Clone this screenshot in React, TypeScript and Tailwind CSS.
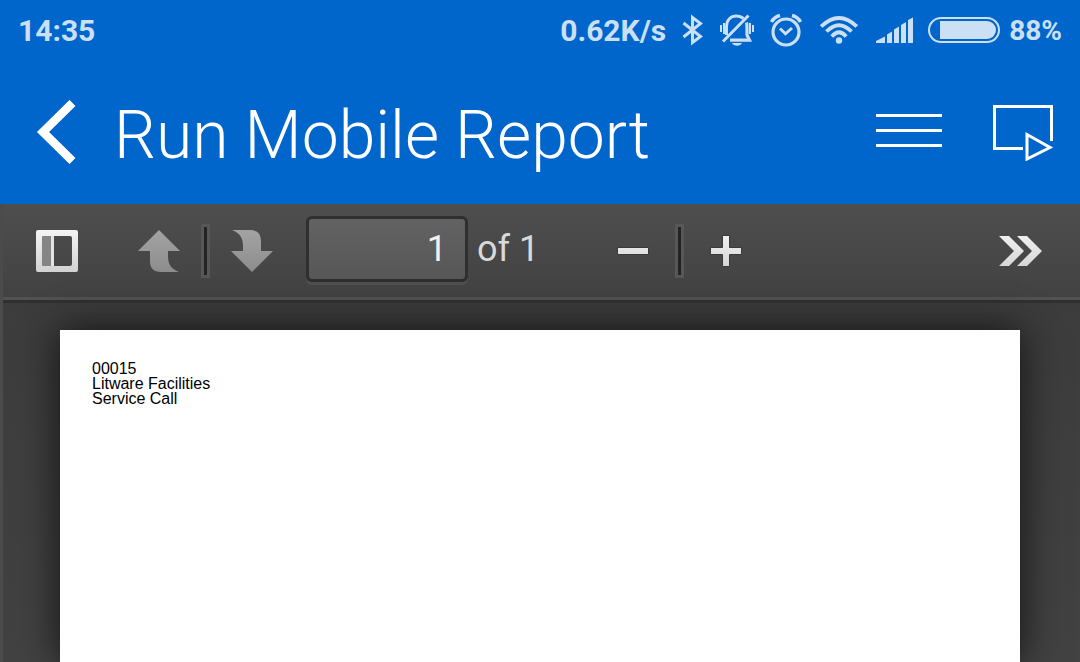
import type { ReactNode } from "react";

function BluetoothIcon() {
  return (
    <svg width="22" height="32" viewBox="0 0 22 32" fill="none" stroke="currentColor" strokeWidth="3">
      <path d="M1.500 9 L18.500 22.500 L10.500 28.500 V3.500 L18.500 9.500 L1.500 23" />
    </svg>
  );
}

function SilentIcon() {
  return (
    <svg width="34" height="34" viewBox="0 0 34 34" fill="none" stroke="currentColor">
      <path d="M6.500 22 V14 C6.500 6.500 11 3 16.500 3 C19.500 3 21.500 3.800 23.500 5.500" strokeWidth="3" />
      <path d="M26.500 9.500 C27 11 27 12.500 27 14 V22 L29.500 27.200 H10" strokeWidth="3.200" />
      <path d="M28.500 2.500 L3 28.500" strokeWidth="3" />
      <path d="M1 12 V19 M4 10 V21 M30 10 V21 M33 12 V19" strokeWidth="2" />
      <path d="M12 30 H22 C20.500 33.500 13.500 33.500 12 30 Z" fill="currentColor" stroke="none" />
    </svg>
  );
}

function AlarmIcon() {
  return (
    <svg width="32" height="34" viewBox="0 0 32 34" fill="none" stroke="currentColor">
      <circle cx="16" cy="19" r="13" strokeWidth="3.200" />
      <path d="M10 15.500 L15.500 20.800 L22 15" strokeWidth="3" />
      <path d="M1.500 9 Q4 4 10 2.500 M22 2.500 Q28 4 30.500 9" strokeWidth="3.400" />
    </svg>
  );
}

function WifiIcon() {
  return (
    <svg width="38" height="28" viewBox="0 0 38 28" fill="none" stroke="currentColor" strokeWidth="3.800">
      <path d="M1.200 10.500 Q19 -6.500 36.800 10.500" />
      <path d="M6.500 15.500 Q19 3 31.500 15.500" />
      <path d="M11.800 20.500 Q19 12 26.200 20.500" />
      <circle cx="19" cy="24.500" r="3.200" fill="currentColor" stroke="none" />
    </svg>
  );
}

function SignalIcon() {
  return (
    <svg width="37" height="26" viewBox="0 0 37 26" fill="currentColor">
      <path d="M0 26 V24 L9 19.500 V26 Z" />
      <path d="M11 26 V17.500 L16 14.500 V26 Z" />
      <path d="M18 26 V12.500 L23 9.500 V26 Z" />
      <path d="M25 26 V8 L30 5 V26 Z" />
      <path d="M32 26 V3 L37 0.500 V26 Z" />
    </svg>
  );
}

function BatteryIcon() {
  return (
    <svg width="72" height="26" viewBox="0 0 72 26" fill="none">
      <rect x="1" y="1" width="70" height="24" rx="12" stroke="currentColor" strokeWidth="2" />
      <path d="M12 4 H59 A9 9 0 0 1 59 22 H12 Z" fill="currentColor" />
    </svg>
  );
}

function StatusBar() {
  return (
    <div className="flex h-[60px] items-center px-[18px] text-[30px] leading-[36px] font-bold text-[#cce0f5]">
      <span className="pt-[2px]">14:35</span>
      <div className="ml-auto flex items-center">
        <span className="pt-[2px]">0.62K/s</span>
        <div className="ml-4 flex items-center gap-4">
          <BluetoothIcon />
          <SilentIcon />
          <AlarmIcon />
        </div>
        <div className="ml-[18px] flex items-center gap-[18px]">
          <WifiIcon />
          <SignalIcon />
        </div>
        <div className="ml-[15px] flex items-center gap-[9px]">
          <BatteryIcon />
          <span className="pt-[2px] text-[28px]">88%</span>
        </div>
      </div>
    </div>
  );
}

function TitleBar() {
  return (
    <header className="flex h-36 items-center pr-[26px] pl-9 text-white">
      <button type="button" aria-label="Back">
        <svg width="40" height="64" viewBox="0 0 40 64" fill="none" stroke="currentColor" strokeWidth="8.500">
          <path d="M36.500 3 L7 32 L36.500 61" />
        </svg>
      </button>
      <h1 className="flex-1 pt-2 pl-[38px] text-[66px] leading-[80px] font-light whitespace-nowrap">
        Run Mobile Report
      </h1>
      <button type="button" aria-label="Menu">
        <svg width="66" height="36" viewBox="0 0 66 36" stroke="currentColor" strokeWidth="3">
          <path d="M0 1.500 H66 M0 16.500 H66 M0 31.500 H66" />
        </svg>
      </button>
      <button type="button" aria-label="Run" className="ml-[50px]">
        <svg width="62" height="58" viewBox="0 0 62 58" fill="none" stroke="currentColor" strokeWidth="3">
          <path d="M31 45.500 H2.500 V3.500 H59.500 V38" />
          <path d="M35 31.500 L58 44.500 L35 56 Z" />
        </svg>
      </button>
    </header>
  );
}

type ToolButtonProps = {
  label: string;
  disabled?: boolean;
  className?: string;
  children: ReactNode;
};

function ToolButton({ label, disabled, className = "w-[84px]", children }: ToolButtonProps) {
  return (
    <button
      type="button"
      aria-label={label}
      disabled={disabled}
      className={`flex h-[66px] items-center justify-center ${className}`}
    >
      {children}
    </button>
  );
}

function Divider() {
  return <div className="h-[54px] w-[9px] border-3 border-[#575757] bg-[#232323]" />;
}

function Toolbar() {
  return (
    <div className="flex h-24 items-center border-b-3 border-[#525252] bg-linear-to-b from-[#4e4e4e] to-[#424242] pt-px pr-3 pl-[6px]">
      {/* gradients shared by the toolbar glyphs */}
      <svg width="0" height="0" className="absolute" aria-hidden="true">
        <linearGradient id="light" x1="0" y1="0" x2="0" y2="42" gradientUnits="userSpaceOnUse">
          <stop offset="0" stopColor="#f4f4f4" />
          <stop offset="1" stopColor="#d2d2d2" />
        </linearGradient>
        <linearGradient id="dim" x1="0" y1="0" x2="0" y2="42" gradientUnits="userSpaceOnUse">
          <stop offset="0" stopColor="#a3a3a3" />
          <stop offset="1" stopColor="#8d8d8d" />
        </linearGradient>
      </svg>

      <ToolButton label="Toggle sidebar" className="w-24">
        <svg width="42" height="42" viewBox="0 0 42 42">
          <path
            fill="url(#light)"
            fillRule="evenodd"
            d="M2 0 H40 Q42 0 42 2 V40 Q42 42 40 42 H2 Q0 42 0 40 V2 Q0 0 2 0 Z M8 6 Q6 6 6 8 V34 Q6 36 8 36 H34 Q36 36 36 34 V8 Q36 6 34 6 Z"
          />
          <path d="M8 6 H15 V36 H8 Q6 36 6 34 V8 Q6 6 8 6 Z" fill="#858585" />
          <path d="M15 6 H18 V36 H15 Z" fill="#e3e3e3" />
        </svg>
      </ToolButton>
      <ToolButton label="Previous page" disabled className="ml-3 w-[84px]">
        <svg width="42" height="42" viewBox="0 0 42 42" fill="url(#dim)">
          <path d="M21 0 L42 21 H30 V26 C30 34 33 39 41 42 H23 Q12 42 12 31 V21 H0 Z" />
        </svg>
      </ToolButton>
      <Divider />
      <ToolButton label="Next page" disabled>
        <svg width="42" height="42" viewBox="0 0 42 42" fill="url(#dim)">
          <path d="M21 42 L42 21 H30 V11 Q30 0 19 0 H1 C9 3 12 8 12 16 V21 H0 Z" />
        </svg>
      </ToolButton>
      <input
        type="text"
        aria-label="Page"
        defaultValue="1"
        className="mb-[5px] ml-3 h-[66px] w-[162px] rounded-md border-3 border-[#2f2f2f] bg-linear-to-b from-[#626262] to-[#575757] pr-[18px] text-right text-[36px] text-[#f2f2f2] shadow-[0_3px_0_#505050]"
      />
      <span className="ml-[9px] pb-[5px] text-[36px] leading-[44px] whitespace-nowrap text-[#d9d9d9]">of 1</span>

      <div className="ml-[52px] flex items-center">
        <ToolButton label="Zoom out">
          <svg width="32" height="42" viewBox="0 0 32 42" fill="url(#light)" stroke="#393939">
            <path d="M0.500 17.500 H31.500 V24.500 H0.500 Z" />
          </svg>
        </ToolButton>
        <Divider />
        <ToolButton label="Zoom in">
          <svg width="32" height="42" viewBox="0 0 32 42" fill="url(#light)" stroke="#393939">
            <path d="M12.500 5.500 H19.500 V17.500 H31.500 V24.500 H19.500 V36.500 H12.500 V24.500 H0.500 V17.500 H12.500 Z" />
          </svg>
        </ToolButton>
      </div>

      <ToolButton label="More tools" className="ml-auto w-24">
        <svg width="43" height="42" viewBox="0 0 43 42" fill="url(#light)">
          <path d="M0 6 H10 L25 21 L10 36 H0 L15 21 Z" />
          <path d="M18 6 H28 L43 21 L28 36 H18 L33 21 Z" />
        </svg>
      </ToolButton>
    </div>
  );
}

export default function App() {
  return (
    <div className="flex h-screen flex-col overflow-hidden bg-[#0066cc] font-[Roboto,sans-serif]">
      <StatusBar />
      <TitleBar />
      <div className="flex flex-1 flex-col border-l-3 border-[#4b4b4b] bg-[#404040]">
        <Toolbar />
        <main className="flex flex-1 flex-col border-t-3 border-[#303030] bg-linear-to-b from-[#3c3c3c] to-[#424242] pt-[27px] pr-[60px] pl-[57px]">
          <div className="flex-1 bg-white px-8 pt-[31px] font-['Liberation_Sans',sans-serif] text-[16px] leading-[15px] text-black shadow-[0_0_36px_#111]">
            <p>00015</p>
            <p>Litware Facilities</p>
            <p>Service Call</p>
          </div>
        </main>
      </div>
    </div>
  );
}
